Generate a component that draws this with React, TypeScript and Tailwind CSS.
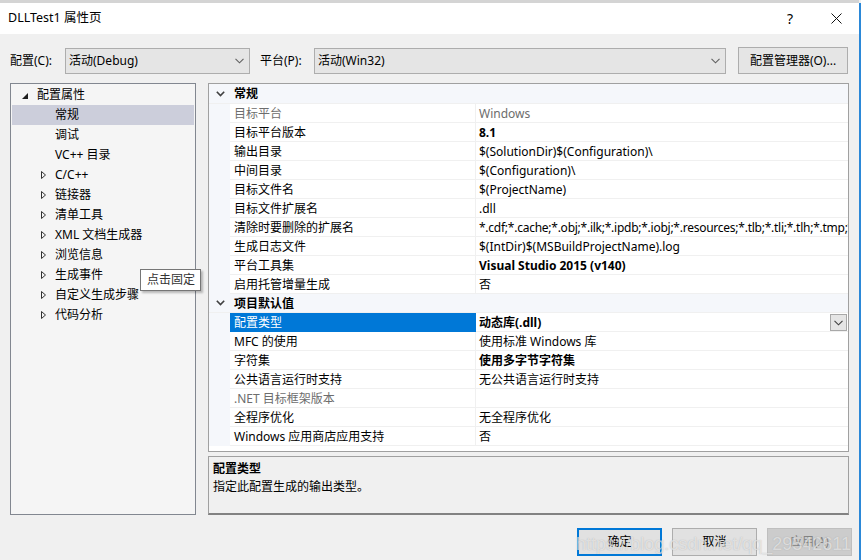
import React from 'react';

type Prop = { label: string; value?: string; dim?: boolean; bold?: boolean; selected?: boolean; tight?: boolean };

const general: Prop[] = [
  { label: '目标平台', value: 'Windows', dim: true },
  { label: '目标平台版本', value: '8.1', bold: true },
  { label: '输出目录', value: '$(SolutionDir)$(Configuration)\\' },
  { label: '中间目录', value: '$(Configuration)\\' },
  { label: '目标文件名', value: '$(ProjectName)' },
  { label: '目标文件扩展名', value: '.dll' },
  { label: '清除时要删除的扩展名', value: '*.cdf;*.cache;*.obj;*.ilk;*.ipdb;*.iobj;*.resources;*.tlb;*.tli;*.tlh;*.tmp;*.rsp;*.pgc;*.pgd;*.meta', tight: true },
  { label: '生成日志文件', value: '$(IntDir)$(MSBuildProjectName).log' },
  { label: '平台工具集', value: 'Visual Studio 2015 (v140)', bold: true },
  { label: '启用托管增量生成', value: '否' },
];

const defaults: Prop[] = [
  { label: '配置类型', value: '动态库(.dll)', bold: true, selected: true },
  { label: 'MFC 的使用', value: '使用标准 Windows 库' },
  { label: '字符集', value: '使用多字节字符集', bold: true },
  { label: '公共语言运行时支持', value: '无公共语言运行时支持' },
  { label: '.NET 目标框架版本', value: '', dim: true },
  { label: '全程序优化', value: '无全程序优化' },
  { label: 'Windows 应用商店应用支持', value: '否' },
];

const tree = [
  { text: '常规', leaf: true, selected: true },
  { text: '调试', leaf: true },
  { text: 'VC++ 目录', leaf: true },
  { text: 'C/C++' },
  { text: '链接器' },
  { text: '清单工具' },
  { text: 'XML 文档生成器' },
  { text: '浏览信息' },
  { text: '生成事件' },
  { text: '自定义生成步骤' },
  { text: '代码分析' },
];

function Chevron({ className = '' }: { className?: string }) {
  return (
    <svg width="9" height="6" viewBox="0 0 9 6" className={className}>
      <polyline points="0.5,0.8 4.5,4.8 8.5,0.8" fill="none" stroke="currentColor" strokeWidth="1.1" />
    </svg>
  );
}

function Combo({ text, width }: { text: string; width: string }) {
  return (
    <div className={`${width} h-[26px] flex items-center justify-between pl-[3px] pr-[5px] bg-[#e5e5e5] border border-[#adadad]`}>
      <span>{text}</span>
      <Chevron className="text-[#606060]" />
    </div>
  );
}

function Category({ title, first }: { title: string; first?: boolean }) {
  return (
    <div className={`flex items-center bg-[#f5f7fb] border-b border-[#f0f0f0] ${first ? 'h-[20px]' : 'h-[19px]'}`}>
      <div className="w-[21px] flex justify-center pl-[2px]">
        <svg width="9" height="6" viewBox="0 0 9 6">
          <polyline points="0.8,0.8 4.5,4.6 8.2,0.8" fill="none" stroke="#404040" strokeWidth="1.6" />
        </svg>
      </div>
      <span className="pl-[4px] pt-px font-bold">{title}</span>
    </div>
  );
}

function PropRow({ p }: { p: Prop }) {
  return (
    <div className="flex h-[19px] leading-[19px]">
      <div className="w-[21px] shrink-0 bg-[#f5f7fb]" />
      <div
        className={`w-[246px] shrink-0 pl-[4px] border-r border-b ${
          p.selected ? 'bg-[#0078d7] text-white border-[#0078d7]' : p.dim ? 'text-[#6d6d6d] border-[#f0f0f0]' : 'border-[#f0f0f0]'
        }`}
      >
        {p.label}
      </div>
      <div className="relative flex-1 min-w-0 pl-[3px] border-b border-[#f0f0f0] overflow-hidden whitespace-nowrap">
        <span className={`${p.bold ? 'font-bold' : ''} ${p.dim ? 'text-[#6d6d6d]' : ''} ${p.tight ? 'tracking-[-0.25px]' : ''}`}>
          {p.value}
        </span>
        {p.selected && (
          <div className="absolute right-[1px] top-px w-[17px] h-[17px] flex items-center justify-center bg-[#e5e5e5] border border-[#a8a8a8]">
            <Chevron className="text-[#404040]" />
          </div>
        )}
      </div>
    </div>
  );
}

export default function App() {
  return (
    <div className="w-[861px] h-[560px] flex overflow-hidden bg-[#f0f0f0] text-[12px] text-black font-['Noto_Sans','Noto_Sans_CJK_SC',sans-serif]">
      <div className="relative w-[859px] flex flex-col">
        <div className="h-[3px] bg-[#d4d4d4]" />

        {/* title bar */}
        <div className="h-[31px] bg-white flex items-center">
          <span className="pl-[8px] flex-1 text-[12.5px]">DLLTest1 属性页</span>
          <div className="w-[46px] h-full flex items-center justify-center text-[14px]">?</div>
          <div className="w-[46px] h-full flex items-center justify-center">
            <svg width="11" height="11" viewBox="0 0 11 11">
              <path d="M0.5 0.5 L10.5 10.5 M10.5 0.5 L0.5 10.5" stroke="#111" strokeWidth="1" />
            </svg>
          </div>
        </div>

        {/* configuration row */}
        <div className="h-[49px] pt-[14px] flex items-start">
          <span className="w-[65px] pl-[10px] leading-[26px]">配置(C):</span>
          <Combo text="活动(Debug)" width="w-[185px]" />
          <span className="w-[64px] pl-[10px] leading-[26px]">平台(P):</span>
          <Combo text="活动(Win32)" width="w-[412px]" />
          <div className="ml-[12px] w-[110px] h-[27px] -mt-px flex items-center justify-center bg-[#e5e5e5] border border-[#adadad]">
            配置管理器(O)...
          </div>
        </div>

        {/* main */}
        <div className="h-[432px] flex pl-[10px] gap-[12px]">
          <div className="relative w-[186px] bg-[#f5f5f5] border border-[#828790] px-px pt-px">
            <div className="h-[20px] flex items-center">
              <svg width="6" height="6" viewBox="0 0 6 6" className="ml-[10px] mt-[2px]">
                <polygon points="6,0 6,6 0,6" fill="#1e1e1e" />
              </svg>
              <span className="ml-[9px]">配置属性</span>
            </div>
            {tree.map((t) => (
              <div key={t.text} className={`h-[20px] flex items-center ${t.selected ? 'bg-[#cccedb]' : ''}`}>
                <div className="w-[43px] flex justify-end pr-[9px]">
                  {!t.leaf && (
                    <svg width="5" height="8" viewBox="0 0 5 8">
                      <polygon points="0.5,0.5 4.5,4 0.5,7.5" fill="none" stroke="#333" strokeWidth="1" />
                    </svg>
                  )}
                </div>
                <span>{t.text}</span>
              </div>
            ))}
            <div className="absolute left-[129px] top-[185px] w-[61px] h-[22px] flex items-center pl-[6px] bg-white border border-[#767676] shadow-[2px_2px_2px_rgba(0,0,0,0.25)] text-[#333] whitespace-nowrap">
              点击固定
            </div>
          </div>

          <div className="w-[641px] flex flex-col gap-[4px]">
            <div className="h-[369px] bg-white border border-[#a0a0a0] overflow-hidden">
              <Category title="常规" first />
              {general.map((p) => (
                <PropRow key={p.label} p={p} />
              ))}
              <Category title="项目默认值" />
              {defaults.map((p) => (
                <PropRow key={p.label} p={p} />
              ))}
            </div>
            <div className="h-[59px] border border-[#a0a0a0] border-b-2 border-b-[#828282] pl-[4px] pt-[3px] leading-[18px]">
              <div className="font-bold">配置类型</div>
              <div>指定此配置生成的输出类型。</div>
            </div>
          </div>
        </div>

        {/* buttons */}
        <div className="pt-[13px] pl-[577px] flex gap-[10px]">
          <div className="w-[85px] h-[28px] flex items-center justify-center bg-[#e1e1e1] border-2 border-[#0078d7]">确定</div>
          <div className="w-[85px] h-[28px] flex items-center justify-center bg-[#e1e1e1] border border-[#adadad]">取消</div>
          <div className="w-[85px] h-[28px] flex items-center justify-center bg-[#cccccc] border border-[#bfbfbf] text-[#838383]">应用(A)</div>
        </div>

        <div className="absolute right-[8px] top-[531px] text-[18px] font-['Liberation_Sans',sans-serif] text-white/60 [text-shadow:0_0_1px_rgba(120,120,120,0.5)] pointer-events-none">
          https://blog.csdn.net/qq_29542611
        </div>
      </div>
      <div className="w-[2px] mt-[3px] bg-[#2b88d8]" />
    </div>
  );
}
